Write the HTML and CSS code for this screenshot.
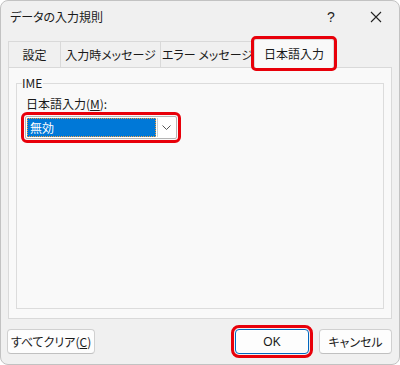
FILE: index.html
```html
<!DOCTYPE html>
<html lang="ja">
<head>
<meta charset="utf-8">
<link rel="stylesheet" href="styles.css">
</head>
<body>
<div class="window">
  <div class="titlebar">
    <span class="title">データの入力規則</span>
    <span class="tb-btn help">?</span>
    <span class="tb-btn close">
      <svg width="12" height="12" viewBox="0 0 12 12"><path d="M1 1L11 11M11 1L1 11" stroke="#222" stroke-width="1.1" fill="none"/></svg>
    </span>
  </div>
  <div class="tabs">
    <div class="tab t1">設定</div>
    <div class="tab t2">入力時メッセージ</div>
    <div class="tab t3">エラー メッセージ</div>
    <div class="tab active hl">日本語入力</div>
  </div>
  <div class="panel">
    <fieldset class="group">
      <legend>IME</legend>
      <div class="field-label">日本語入力(<u>M</u>):</div>
      <div class="combo hl">
        <div class="combo-value"><span>無効</span></div>
        <div class="combo-btn">
          <svg width="9" height="5" viewBox="0 0 9 5"><path d="M0.5 0.5L4.5 4.5L8.5 0.5" stroke="#555" stroke-width="1" fill="none"/></svg>
        </div>
      </div>
    </fieldset>
  </div>
  <div class="footer">
    <button class="btn clear">すべてクリア(<u>C</u>)</button>
    <button class="btn ok hl">OK</button>
    <button class="btn cancel">キャンセル</button>
  </div>
</div>
</body>
</html>
```

FILE: styles.css
```css
* { box-sizing: border-box; }
html, body {
  margin: 0;
  background: #ffffff;
}
body {
  font-family: "Noto Sans CJK JP", "Noto Sans", sans-serif;
  font-size: 12px;
  font-feature-settings: "palt";
  color: #1a1a1a;
}
.window {
  width: 400px;
  height: 365px;
  border: 1px solid #c2c2c2;
  border-radius: 8px;
  background: #f0f0f0;
  display: flex;
  flex-direction: column;
  overflow: hidden;
}
.titlebar {
  height: 31px;
  display: flex;
  align-items: center;
  padding-left: 9px;
  flex: none;
}
.title {
  font-size: 12px;
  line-height: 16px;
  color: #1a1a1a;
}
.tb-btn {
  display: flex;
  align-items: center;
  justify-content: center;
  height: 31px;
}
.help {
  margin-left: auto;
  width: 44px;
  font-family: "Liberation Sans", sans-serif;
  font-size: 14px;
  color: #222;
}
.close {
  width: 46px;
}
.tabs {
  display: flex;
  align-items: flex-end;
  margin: 8px 0 0 7px;
  height: 28px;
  flex: none;
  position: relative;
  z-index: 1;
}
.tab {
  height: 26px;
  margin-bottom: 1px;
  border: 1px solid #d9d9d9;
  border-bottom: none;
  background: #f0f0f0;
  display: flex;
  align-items: center;
  justify-content: center;
  line-height: 16px;
  color: #1a1a1a;
  white-space: nowrap;
}
.tab + .tab { margin-left: -1px; }
.t1 { width: 53px; }
.t2 { width: 101px; }
.t3 { width: 95px; }
.tab.active {
  width: 80px;
  height: 29px;
  margin-bottom: 0;
  margin-left: -1px;
  background: #f9f9f9;
  border-color: #d9d9d9;
}
.hl {
  outline: 3px solid #e8000a;
  outline-offset: 1px;
  border-radius: 2px;
}
.tab.hl { outline-offset: 0; }
.panel {
  margin: -1px 7px 0 7px;
  height: 252px;
  border: 1px solid #d9d9d9;
  background: #f9f9f9;
  padding: 8px 7px 9px 7px;
  display: flex;
  flex-direction: column;
  flex: none;
}
.group {
  flex: 1;
  margin: 0;
  min-width: 0;
  border: 1px solid #dcdcdc;
  padding: 0 5px 0 5px;
}
.group legend {
  padding: 0 1px 0 0;
  line-height: 14px;
  font-size: 12px;
  color: #1a1a1a;
}
.field-label {
  margin: 6px 0 0 4px;
  line-height: 16px;
}
.combo {
  margin: 4px 0 0 3px;
  width: 152px;
  height: 23px;
  border: 1px solid #b5b5b5;
  background: #ffffff;
  padding: 1px;
  display: flex;
}
.combo-value {
  flex: 1;
  background: #0078d7;
  border: 1px dotted #f0a040;
  color: #ffffff;
  display: flex;
  align-items: center;
  padding-left: 2px;
  line-height: 16px;
  margin-right: 1px;
}
.combo-btn {
  width: 18px;
  border-left: 1px solid #d0d0d0;
  background: #ffffff;
  display: flex;
  align-items: center;
  justify-content: center;
}
.footer {
  display: flex;
  margin-top: 10px;
  padding: 0 7px 0 6px;
}
.btn {
  height: 25px;
  border: 1px solid #d0d0d0;
  border-bottom-color: #c0c0c0;
  border-radius: 4px;
  background: #fdfdfd;
  font-family: inherit;
  font-size: 12px;
  font-feature-settings: "palt";
  color: #1a1a1a;
  padding: 0;
  line-height: 16px;
}
.clear { width: 88px; }
.ok {
  width: 74px;
  margin-left: auto;
  border-color: #0067c0;
  box-shadow: inset 0 0 0 1px #ffffff;
  font-family: "Liberation Sans", sans-serif;
  outline-offset: 1px;
}
.cancel {
  width: 73px;
  margin-left: 10px;
}
```
